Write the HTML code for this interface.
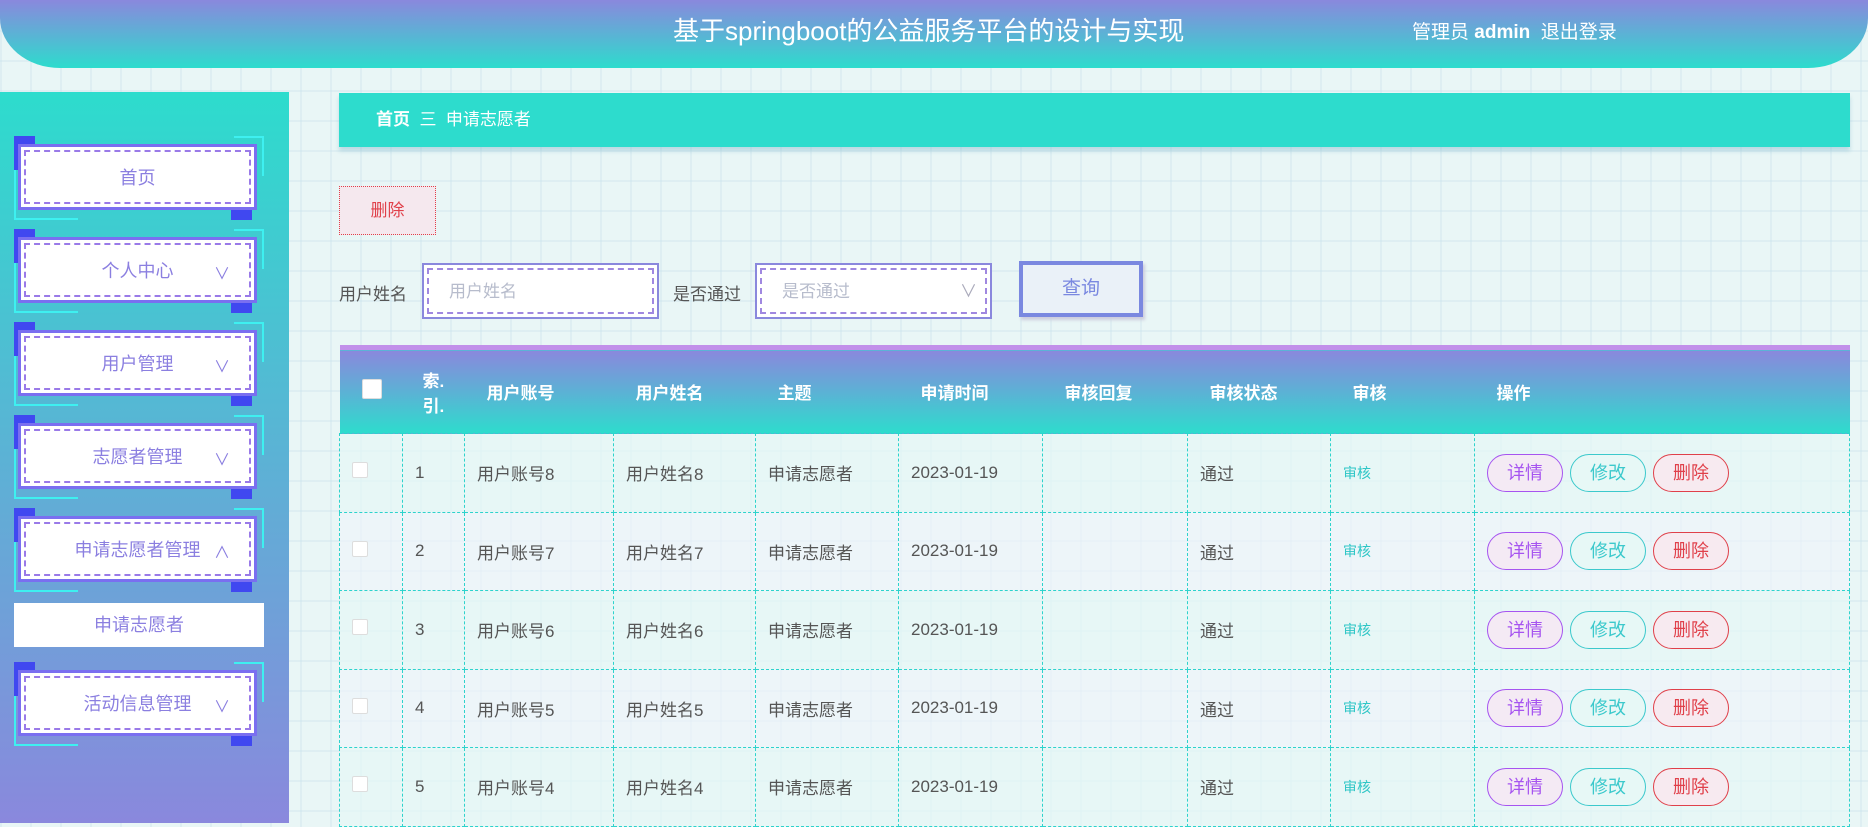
<!DOCTYPE html>
<html><head><meta charset="utf-8">
<style>
*{margin:0;padding:0;box-sizing:border-box}
body{width:1868px;height:823px;overflow:hidden;font-family:"Liberation Sans","Noto Sans CJK SC",sans-serif;background:#e9f6f6;position:relative;
background-image:linear-gradient(rgba(200,225,235,.35) 2px,transparent 2px),linear-gradient(90deg,rgba(200,225,235,.35) 2px,transparent 2px);background-size:30px 30px;}
.hdr{position:absolute;left:0;top:0;width:1868px;height:68px;background:linear-gradient(#8a88dd,#2ddccd);border-radius:0 0 60px 60px/0 0 50px 50px;color:#fff}
.title{position:absolute;left:673px;top:11px;font-size:26px;white-space:nowrap}
.user{position:absolute;left:1412px;top:17px;font-size:19px;white-space:nowrap}
.side{position:absolute;left:0;top:92px;width:289px;height:731px;background:linear-gradient(#2ddccd,#8a88dd)}
.item{position:absolute;left:14px;width:250px;height:84px}
.item .c1{position:absolute;left:0;top:0;width:21px;height:34px;background:#4048f0}
.item .c2{position:absolute;right:12px;bottom:0;width:21px;height:28px;background:#4048f0}
.item .fr{position:absolute;left:4px;top:8px;width:239px;height:66px;border:3px solid #7a6ff0;background:#fff}
.item .in{position:absolute;left:3px;top:3px;right:3px;bottom:3px;border:2px dashed #9a7ae8;display:flex;align-items:center;justify-content:center;color:#8b7fe0;font-size:18px}
.item .ln{position:absolute;left:0;top:34px;width:2px;height:50px;background:#3ef0f0}
.item .lb{position:absolute;left:0;bottom:0;width:64px;height:2px;background:#3ef0f0}
.item .rb{position:absolute;right:0;top:0;width:2px;height:40px;background:#3ef0f0}
.item .rt{position:absolute;right:0;top:0;width:30px;height:2px;background:#3ef0f0}
.arr{position:absolute;right:24px;top:20px;color:#8b7fe0;font-size:16px}
.bc{position:absolute;left:339px;top:93px;width:1511px;height:54px;background:#2ddccd;box-shadow:0 4px 4px rgba(120,180,200,.4);color:#fff;font-size:17px;line-height:54px;padding-left:37px}
.del{position:absolute;left:339px;top:186px;width:97px;height:49px;background:#f5e8ee;border:1px dotted #e0404a;color:#e0404a;font-size:17px;text-align:center;line-height:47px}
.lbl{position:absolute;top:280px;font-size:17px;color:#555}
.inp{position:absolute;top:263px;height:56px;width:237px;border:2px solid #8a88dd;background:#fff;padding:3px}
.inp div{border:2px dashed #a088e0;height:100%;color:#b7bccc;font-size:17px;line-height:44px;padding-left:20px;position:relative}
.q{position:absolute;left:1019px;top:261px;width:124px;height:56px;border:4px solid #7a88e0;background:#eaf1f8;color:#7a88e0;font-size:19px;text-align:center;line-height:48px;box-shadow:2px 3px 3px #ccd}
table{position:absolute;left:339px;top:345px;width:1511px;border-collapse:collapse;border-top:5px solid #c290ea}
th{height:86px;background:linear-gradient(#8a88dd,#2ddccd);color:#fff;font-size:17px;text-align:left;padding-left:22px;font-weight:bold}
td{height:78.5px;border:1px dashed #2dd3cc;font-size:17px;color:#555;padding-left:12px;vertical-align:middle}
tr:nth-child(even) td{background:rgba(230,248,246,.7)}
tr:nth-child(odd) td{background:rgba(240,245,252,.6)}
.cb{display:inline-block;width:16px;height:16px;background:#fff;border:1px solid #ddd;border-radius:2px}
.sh{color:#2ec6c6;font-size:14px}
.b{display:inline-block;width:76px;height:38px;border-radius:19px;text-align:center;line-height:36px;font-size:18px;margin-right:7px}
.b1{border:1px solid #a654f0;color:#a654f0;background:#f4eaf4}
.b2{border:1px solid #3cc9cc;color:#3cc9cc;background:#e7f8f6}
.b3{border:1px solid #e0404a;color:#e0404a;background:#f7eaf0}
</style></head><body>
<div class="hdr"><div class="title">基于springboot的公益服务平台的设计与实现</div><div class="user">管理员 <b>admin</b>&nbsp; 退出登录</div></div>
<div class="side"></div>
<div class="item" style="top:136px"><div class="c1"></div><div class="c2"></div><div class="ln"></div><div class="lb"></div><div class="rb"></div><div class="rt"></div><div class="fr"><div class="in">首页</div></div></div>
<div class="item" style="top:229px"><div class="c1"></div><div class="c2"></div><div class="ln"></div><div class="lb"></div><div class="rb"></div><div class="rt"></div><div class="fr"><div class="in">个人中心</div><span class="arr">∨</span></div></div>
<div class="item" style="top:322px"><div class="c1"></div><div class="c2"></div><div class="ln"></div><div class="lb"></div><div class="rb"></div><div class="rt"></div><div class="fr"><div class="in">用户管理</div><span class="arr">∨</span></div></div>
<div class="item" style="top:415px"><div class="c1"></div><div class="c2"></div><div class="ln"></div><div class="lb"></div><div class="rb"></div><div class="rt"></div><div class="fr"><div class="in">志愿者管理</div><span class="arr">∨</span></div></div>
<div class="item" style="top:508px"><div class="c1"></div><div class="c2"></div><div class="ln"></div><div class="lb"></div><div class="rb"></div><div class="rt"></div><div class="fr"><div class="in">申请志愿者管理</div><span class="arr">∧</span></div></div>
<div style="position:absolute;left:14px;top:603px;width:250px;height:44px;background:#fff;color:#8b7fe0;font-size:18px;text-align:center;line-height:44px">申请志愿者</div>
<div class="item" style="top:662px"><div class="c1"></div><div class="c2"></div><div class="ln"></div><div class="lb"></div><div class="rb"></div><div class="rt"></div><div class="fr"><div class="in">活动信息管理</div><span class="arr">∨</span></div></div>
<div class="bc"><b>首页</b>&nbsp;&nbsp;三&nbsp;&nbsp;申请志愿者</div>
<div class="del">删除</div>
<div class="lbl" style="left:339px">用户姓名</div>
<div class="inp" style="left:422px"><div>用户姓名</div></div>
<div class="lbl" style="left:673px">是否通过</div>
<div class="inp" style="left:755px"><div>是否通过<span style="position:absolute;right:8px;color:#aab">∨</span></div></div>
<div class="q">查询</div>
<table>
<tr><th style="width:63px"><span class="cb" style="width:20px;height:20px"></span></th><th style="width:62px;padding-left:20px">索.<br>引.</th><th style="width:149px">用户账号</th><th style="width:142px">用户姓名</th><th style="width:143px">主题</th><th style="width:144px">申请时间</th><th style="width:145px">审核回复</th><th style="width:143px">审核状态</th><th style="width:144px">审核</th><th>操作</th></tr>
<tr><td><span class="cb"></span></td><td>1</td><td>用户账号8</td><td>用户姓名8</td><td>申请志愿者</td><td>2023-01-19</td><td></td><td>通过</td><td class="sh">审核</td><td><span class="b b1">详情</span><span class="b b2">修改</span><span class="b b3">删除</span></td></tr>
<tr><td><span class="cb"></span></td><td>2</td><td>用户账号7</td><td>用户姓名7</td><td>申请志愿者</td><td>2023-01-19</td><td></td><td>通过</td><td class="sh">审核</td><td><span class="b b1">详情</span><span class="b b2">修改</span><span class="b b3">删除</span></td></tr>
<tr><td><span class="cb"></span></td><td>3</td><td>用户账号6</td><td>用户姓名6</td><td>申请志愿者</td><td>2023-01-19</td><td></td><td>通过</td><td class="sh">审核</td><td><span class="b b1">详情</span><span class="b b2">修改</span><span class="b b3">删除</span></td></tr>
<tr><td><span class="cb"></span></td><td>4</td><td>用户账号5</td><td>用户姓名5</td><td>申请志愿者</td><td>2023-01-19</td><td></td><td>通过</td><td class="sh">审核</td><td><span class="b b1">详情</span><span class="b b2">修改</span><span class="b b3">删除</span></td></tr>
<tr><td><span class="cb"></span></td><td>5</td><td>用户账号4</td><td>用户姓名4</td><td>申请志愿者</td><td>2023-01-19</td><td></td><td>通过</td><td class="sh">审核</td><td><span class="b b1">详情</span><span class="b b2">修改</span><span class="b b3">删除</span></td></tr>
</table>
</body></html>
